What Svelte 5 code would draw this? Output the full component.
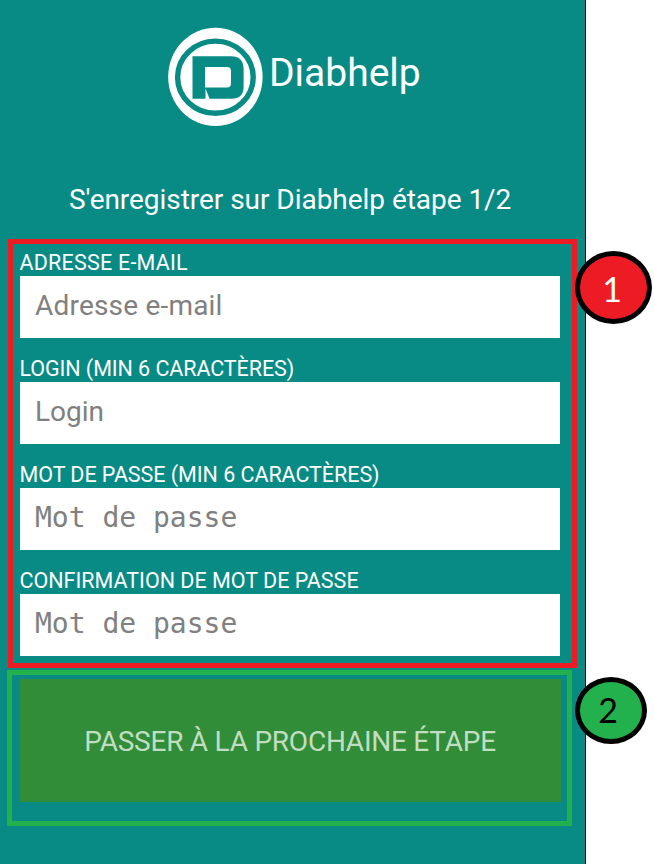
<script>
  const fields = [
    { id: 'email', label: 'ADRESSE E-MAIL', hint: 'Adresse e-mail', labelSpacing: 0.22, hintSpacing: 0.2 },
    { id: 'login', label: 'LOGIN (MIN 6 CARACTÈRES)', hint: 'Login', labelSpacing: -0.08, hintSpacing: 0 },
    { id: 'password', label: 'MOT DE PASSE (MIN 6 CARACTÈRES)', hint: 'Mot de passe', mono: true, labelSpacing: -0.05, hintSpacing: 0 },
    { id: 'confirm', label: 'CONFIRMATION DE MOT DE PASSE', hint: 'Mot de passe', mono: true, labelSpacing: 0, hintSpacing: 0 }
  ];
</script>

<div class="page">
  <main class="screen">
    <header class="brand">
      <svg class="logo" width="96" height="100" viewBox="167 27 96 100" aria-hidden="true">
        <ellipse cx="215.4" cy="76.9" rx="47.2" ry="49.2" fill="#fff" />
        <ellipse cx="215.4" cy="77.2" rx="37.8" ry="36.1" fill="none" stroke="#088b85" stroke-width="5.4" />
        <path
          fill="#088b85"
          fill-rule="evenodd"
          d="M192.5 56.2H231Q243.6 56.2 243.6 69V87Q243.6 98.8 231 98.8H209.5L205.5 88.5V98.8H192.5ZM205 67V87.5H227Q231 87.5 231 83.5V71Q231 67 227 67Z"
        />
      </svg>
      <h1>Diabhelp</h1>
    </header>

    <p class="step">S'enregistrer sur Diabhelp étape 1/2</p>

    <form>
      <section class="fields">
        {#each fields as field}
          <div class="field">
            <label for={field.id} style:letter-spacing="{field.labelSpacing}px">{field.label}</label>
            <input
              id={field.id}
              class:mono={field.mono}
              placeholder={field.hint}
              style:letter-spacing="{field.hintSpacing}px"
            />
          </div>
        {/each}
      </section>
      <section class="submit">
        <button type="button">PASSER À LA PROCHAINE ÉTAPE</button>
      </section>
    </form>
  </main>

  <div class="badge one"><span>1</span></div>
  <div class="badge two"><span>2</span></div>
</div>

<style>
  :global(body) {
    background: #fff;
  }
  .page {
    position: relative;
    width: 654px;
    height: 864px;
    overflow: hidden;
    background: #fff;
    font-family: Roboto, "Liberation Sans", sans-serif;
  }
  .screen {
    box-sizing: border-box;
    width: 586px;
    height: 864px;
    border-right: 1px solid #000;
    background: #088b85;
    color: #fff;
  }
  .brand {
    display: flex;
    height: 127px;
    padding: 27px 0 0 167px;
    box-sizing: border-box;
  }
  .logo {
    flex: none;
  }
  h1 {
    margin: 23px 0 0 6px;
    font-size: 39px;
    line-height: 46px;
    font-weight: 400;
    white-space: nowrap;
  }
  .step {
    height: 32px;
    margin: 57px 0 23px;
    padding-left: 69px;
    font-size: 28px;
    line-height: 32px;
    letter-spacing: -0.04px;
    white-space: nowrap;
  }
  .fields {
    box-sizing: border-box;
    width: 569px;
    height: 429px;
    margin-left: 8px;
    padding: 5px 11.5px 0 6.5px;
    border: 5px solid #ed1c24;
  }
  .field {
    height: 106px;
  }
  label {
    display: block;
    height: 27px;
    font-size: 21.5px;
    line-height: 27px;
    white-space: nowrap;
  }
  input {
    display: block;
    box-sizing: border-box;
    width: 540.5px;
    height: 61.5px;
    padding: 0 15.5px 3px;
    border: 0;
    border-radius: 0;
    background: #fff;
    font: 28px Roboto, sans-serif;
  }
  input::placeholder {
    color: #808080;
    opacity: 1;
  }
  input.mono {
    font-family: "DejaVu Sans Mono", monospace;
  }
  .submit {
    box-sizing: border-box;
    width: 565px;
    height: 156px;
    margin: 2px 0 0 7px;
    padding: 4px 0 0 7.5px;
    border: 5px solid #22b14c;
  }
  button {
    display: block;
    width: 541px;
    height: 122.5px;
    padding: 2px 0 0;
    border: 0;
    background: #318d37;
    color: #c1ddc3;
    font: 28px Roboto, sans-serif;
    letter-spacing: -0.24px;
    white-space: nowrap;
  }
  .badge {
    position: absolute;
    left: 575px;
    box-sizing: border-box;
    display: flex;
    justify-content: center;
    border: 5px solid #000;
    border-radius: 50%;
    font: 34px/40px Lato, sans-serif;
  }
  .one {
    top: 251px;
    width: 77px;
    height: 73px;
    background: #ed1c24;
    color: #fff;
  }
  .two {
    top: 677px;
    width: 72px;
    height: 67px;
    background: #22b14c;
    color: #000;
  }
  .one span {
    margin: 13px 3px 0 0;
  }
  .two span {
    margin: 8px 6px 0 0;
  }
</style>
